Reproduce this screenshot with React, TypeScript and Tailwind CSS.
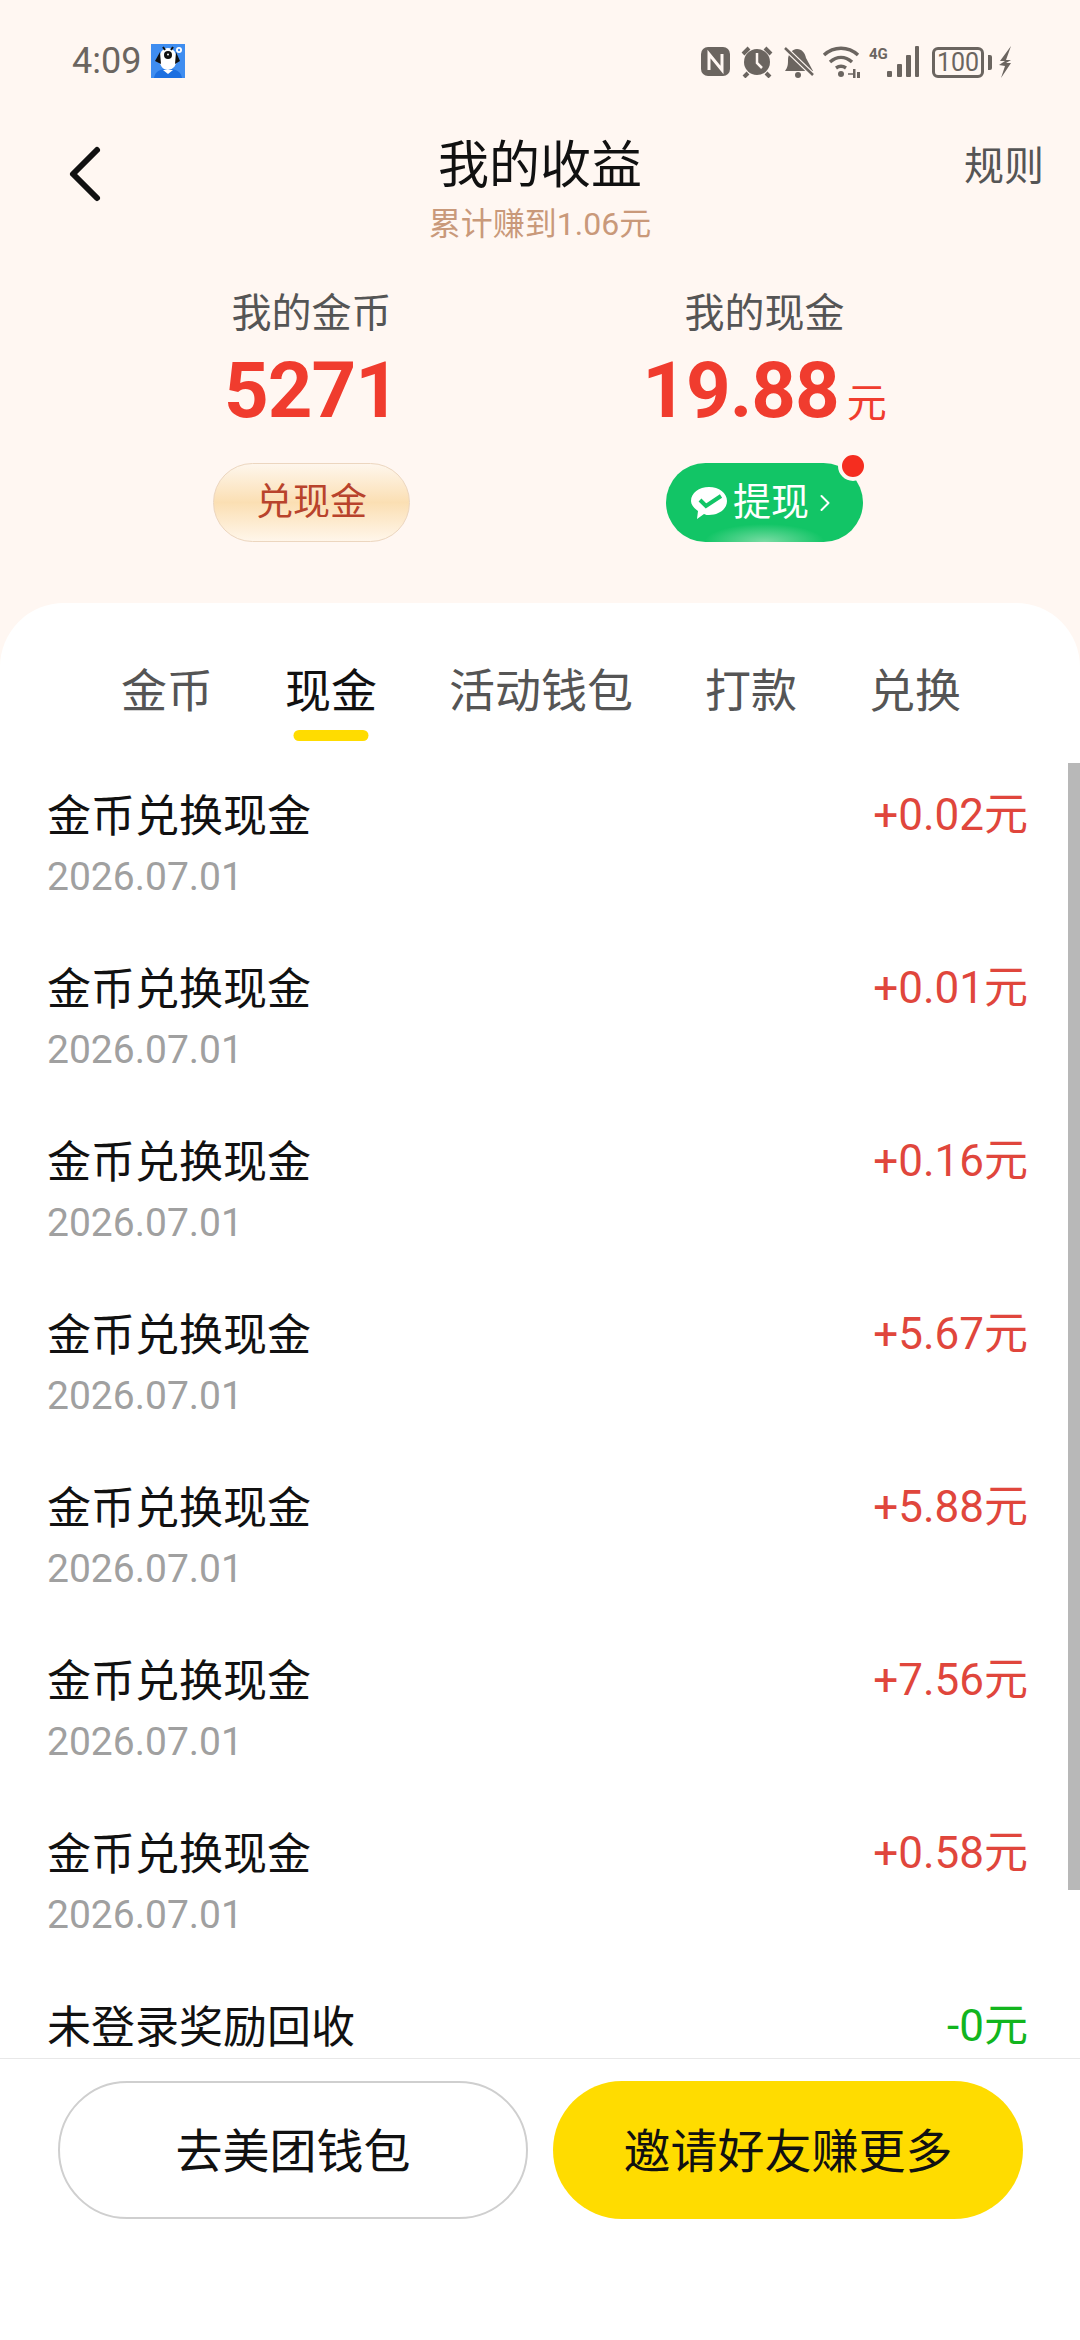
import React from "react";
import { ChevronLeft, ChevronRight } from "lucide-react";

const FONT = "font-['Roboto','Noto_Sans_CJK_SC',sans-serif]";

const tabs = [
  { label: "金币", active: false },
  { label: "现金", active: true },
  { label: "活动钱包", active: false },
  { label: "打款", active: false },
  { label: "兑换", active: false },
];

const records = ["+0.02元", "+0.01元", "+0.16元", "+5.67元", "+5.88元", "+7.56元", "+0.58元"];

const StatusIcons: React.FC = () => (
  <svg width="160" height="32" viewBox="0 0 160 32" fill="#6b6560">
    {/* NFC */}
    <rect x="0" y="1" width="29" height="29" rx="7" />
    <path d="M8 24V8l13 16V8" fill="none" stroke="#fff7f2" strokeWidth="3" />
    {/* alarm */}
    <circle cx="56" cy="16" r="13" />
    <path d="M42 8l6-6M70 8l-6-6M47 27l-4 4M65 27l4 4" stroke="#6b6560" strokeWidth="4" />
    <path d="M56 7v10l5 5" fill="none" stroke="#fff7f2" strokeWidth="2.5" />
    {/* muted bell */}
    <path d="M84 25c3-4 3-7 3-11 0-6 4-11 9-11 5 0 8 4 9 9l7 13z" />
    <circle cx="97" cy="29" r="3" />
    <path d="M84 2l28 27" stroke="#fff7f2" strokeWidth="5" />
    <path d="M84 2l28 27" stroke="#6b6560" strokeWidth="2.5" />
    {/* wifi */}
    <g fill="none" stroke="#6b6560" strokeWidth="3.5">
      <path d="M123 9c10-9 24-9 34 0" />
      <path d="M129 16c7-6 15-6 22 0" />
      <path d="M135 22c3-2 7-2 10 0" />
    </g>
    <circle cx="140" cy="28" r="3" />
    <path d="M152 23h2.5v9H152zM156 26h3v6h-3z" />
    <path d="M147 28h6" stroke="#6b6560" strokeWidth="1.5" />
  </svg>
);

const SignalIcon: React.FC = () => (
  <svg width="32" height="32" viewBox="0 0 32 32" fill="#6b6560">
    <rect x="0" y="25" width="5" height="6" rx="1" />
    <rect x="10" y="18" width="5" height="13" rx="1" />
    <rect x="19" y="9" width="5" height="22" rx="1" />
    <rect x="28" y="0" width="4" height="31" rx="1" />
  </svg>
);

const BatteryIcon: React.FC = () => (
  <div className="flex items-center">
    <div className="flex h-[31px] w-[52px] items-center justify-center rounded-[6px] border-[3px] border-[#6b6560] text-[25px] leading-none text-[#6b6560]">
      100
    </div>
    <div className="ml-[4px] h-[15px] w-[4px] rounded-r-[2px] bg-[#6b6560]" />
    <svg width="14" height="32" viewBox="0 0 14 32" fill="#6b6560" className="ml-[6px]">
      <path d="M13 0L2 15h5l-6 4 6 1-4 12 10-15H8l5-3H8z" />
    </svg>
  </div>
);

const Mascot: React.FC = () => (
  <svg width="34" height="34" viewBox="0 0 34 34">
    <rect width="34" height="34" fill="#3f8df0" />
    <circle cx="28" cy="6" r="3" fill="#fff" />
    <circle cx="28" cy="6" r="1.2" fill="#3f8df0" />
    <path d="M3 34c1-6 5-9 14-9s13 3 14 9z" fill="#1c6fe0" />
    <path d="M12 26l5 4 5-4z" fill="#fff" />
    <ellipse cx="17" cy="15" rx="9" ry="11" fill="#fff" />
    <path d="M9 8l-5 9 6 3zM25 8l4 9-5 3z" fill="#111" />
    <path d="M12 3l2 3M22 3l-2 3" stroke="#111" strokeWidth="2" />
    <circle cx="17" cy="11" r="4" fill="#111" />
    <circle cx="17" cy="10.5" r="1" fill="#fff" />
  </svg>
);

const WechatMark: React.FC = () => (
  <svg width="38" height="34" viewBox="0 0 38 34">
    <path d="M19 1c10 0 18 6 18 14s-8 14-18 14c-2 0-3 0-5-1l-7 5 1-8C4 22 1 19 1 15 1 7 9 1 19 1z" fill="#fff" />
    <path d="M10 14l6 6L31 10" fill="none" stroke="#12c566" strokeWidth="4" />
  </svg>
);

const App: React.FC = () => {
  return (
    <div className={`${FONT} flex h-[2340px] w-[1080px] flex-col overflow-hidden bg-[#fff7f2]`}>
      {/* status bar */}
      <div className="flex h-[123px] shrink-0 items-start justify-between pl-[72px] pr-[68px] pt-[44px]">
        <div className="flex items-center gap-[10px]">
          <span className="text-[36px] leading-[34px] text-[#6b6560]">4:09</span>
          <Mascot />
        </div>
        <div className="flex items-start pt-[2px]">
          <StatusIcons />
          <span className="ml-[8px] w-[18px] text-[15px] font-bold leading-[16px] text-[#6b6560]">4G</span>
          <SignalIcon />
          <div className="ml-[13px]">
            <BatteryIcon />
          </div>
        </div>
      </div>

      {/* title */}
      <div className="relative flex shrink-0 flex-col items-center">
        <ChevronLeft className="absolute left-[37px] top-[3px] h-[96px] w-[96px] text-[#111]" strokeWidth={1.5} />
        <span className="absolute right-[36px] top-[21px] text-[40px] leading-[46px] text-[#555]">规则</span>
        <h1 className="text-[51px] font-normal leading-[86px] text-[#111]">我的收益</h1>
        <p className="text-[32px] leading-[30px] text-[#c9997a]">累计赚到1.06元</p>
      </div>

      {/* balances */}
      <div className="mt-[51px] grid shrink-0 grid-cols-2 pl-[85px] pr-[89px]">
        <div className="flex flex-col items-center">
          <span className="text-[40px] leading-[48px] text-[#555]">我的金币</span>
          <span className="mt-[13px] text-[78px] font-bold leading-[80px] tracking-[-1px] text-[#f03c2e]">5271</span>
          <button className="mt-[32px] flex h-[79px] w-[197px] items-center justify-center rounded-full border border-[#ecd6bf] bg-gradient-to-b from-[#fef6ec] via-[#fbdfb3] to-[#fff6ea] text-[37px] text-[#b8432c]">
            兑现金
          </button>
        </div>
        <div className="flex flex-col items-center">
          <span className="text-[40px] leading-[48px] text-[#555]">我的现金</span>
          <div className="mt-[13px] flex items-baseline">
            <span className="text-[78px] font-bold leading-[80px] tracking-[-1px] text-[#f03c2e]">19.88</span>
            <span className="ml-[8px] text-[40px] leading-[40px] text-[#f03c2e]">元</span>
          </div>
          <button className="relative mt-[32px] flex h-[79px] w-[197px] items-center justify-center rounded-full bg-[#12c566] bg-[radial-gradient(ellipse_60px_18px_at_50%_100%,#7bdca5,#12c566)] text-[38px] text-white">
            <span className="relative flex items-center">
              <WechatMark />
              <span className="ml-[5px]">提现</span>
              <ChevronRight className="ml-[2px] h-[42px] w-[28px] text-white" strokeWidth={1.7} />
            </span>
            <span className="absolute right-[-5px] top-[-12px] h-[30px] w-[30px] rounded-full border-[4px] border-[#fff7f2] bg-[#f52d1f]" />
          </button>
        </div>
      </div>

      {/* sheet */}
      <div className="relative mt-[61px] flex min-h-0 flex-1 flex-col rounded-t-[64px] bg-white">
        <div className="flex h-[160px] shrink-0 items-start gap-[72px] pl-[121px] pt-[56px]">
          {tabs.map((tab) => (
            <div key={tab.label} className="relative">
              <span className={`block text-[46px] leading-[64px] ${tab.active ? "text-[#111]" : "text-[#555]"}`}>
                {tab.label}
              </span>
              {tab.active && (
                <span className="absolute left-1/2 top-[71px] h-[11px] w-[75px] -translate-x-1/2 rounded-full bg-[#ffdc00]" />
              )}
            </div>
          ))}
        </div>

        <div className="relative min-h-0 flex-1 overflow-hidden pl-[47px] pr-[52px]">
          {records.map((amount) => (
            <div key={amount} className="flex h-[173px] items-start justify-between pt-[26px]">
              <div>
                <div className="text-[44px] leading-[56px] text-[#111]">金币兑换现金</div>
                <div className="mt-[7px] text-[39px] leading-[50px] text-[#a0a0a0]">2026.07.01</div>
              </div>
              <div className="mt-[-2px] text-[44px] leading-[56px] text-[#e0463c]">{amount}</div>
            </div>
          ))}
          <div className="flex h-[173px] items-start justify-between pt-[26px]">
            <div className="text-[44px] leading-[56px] text-[#111]">未登录奖励回收</div>
            <div className="mt-[-2px] text-[44px] leading-[56px] text-[#12b51e]">-0元</div>
          </div>
          <div className="absolute right-0 top-0 h-[1127px] w-[12px] bg-[#b8b8b8]" />
        </div>

        {/* footer */}
        <div className="flex h-[282px] shrink-0 items-start gap-[25px] border-t border-[#e8e8e8] bg-white pl-[58px] pt-[22px]">
          <button className="flex h-[138px] w-[470px] items-center justify-center rounded-full border-2 border-[#cfcfcf] pt-[4px] text-[47px] text-[#111]">
            去美团钱包
          </button>
          <button className="flex h-[138px] w-[470px] items-center justify-center rounded-full bg-[#ffdc00] pt-[4px] text-[47px] text-[#111]">
            邀请好友赚更多
          </button>
        </div>
      </div>
    </div>
  );
};

export default App;
